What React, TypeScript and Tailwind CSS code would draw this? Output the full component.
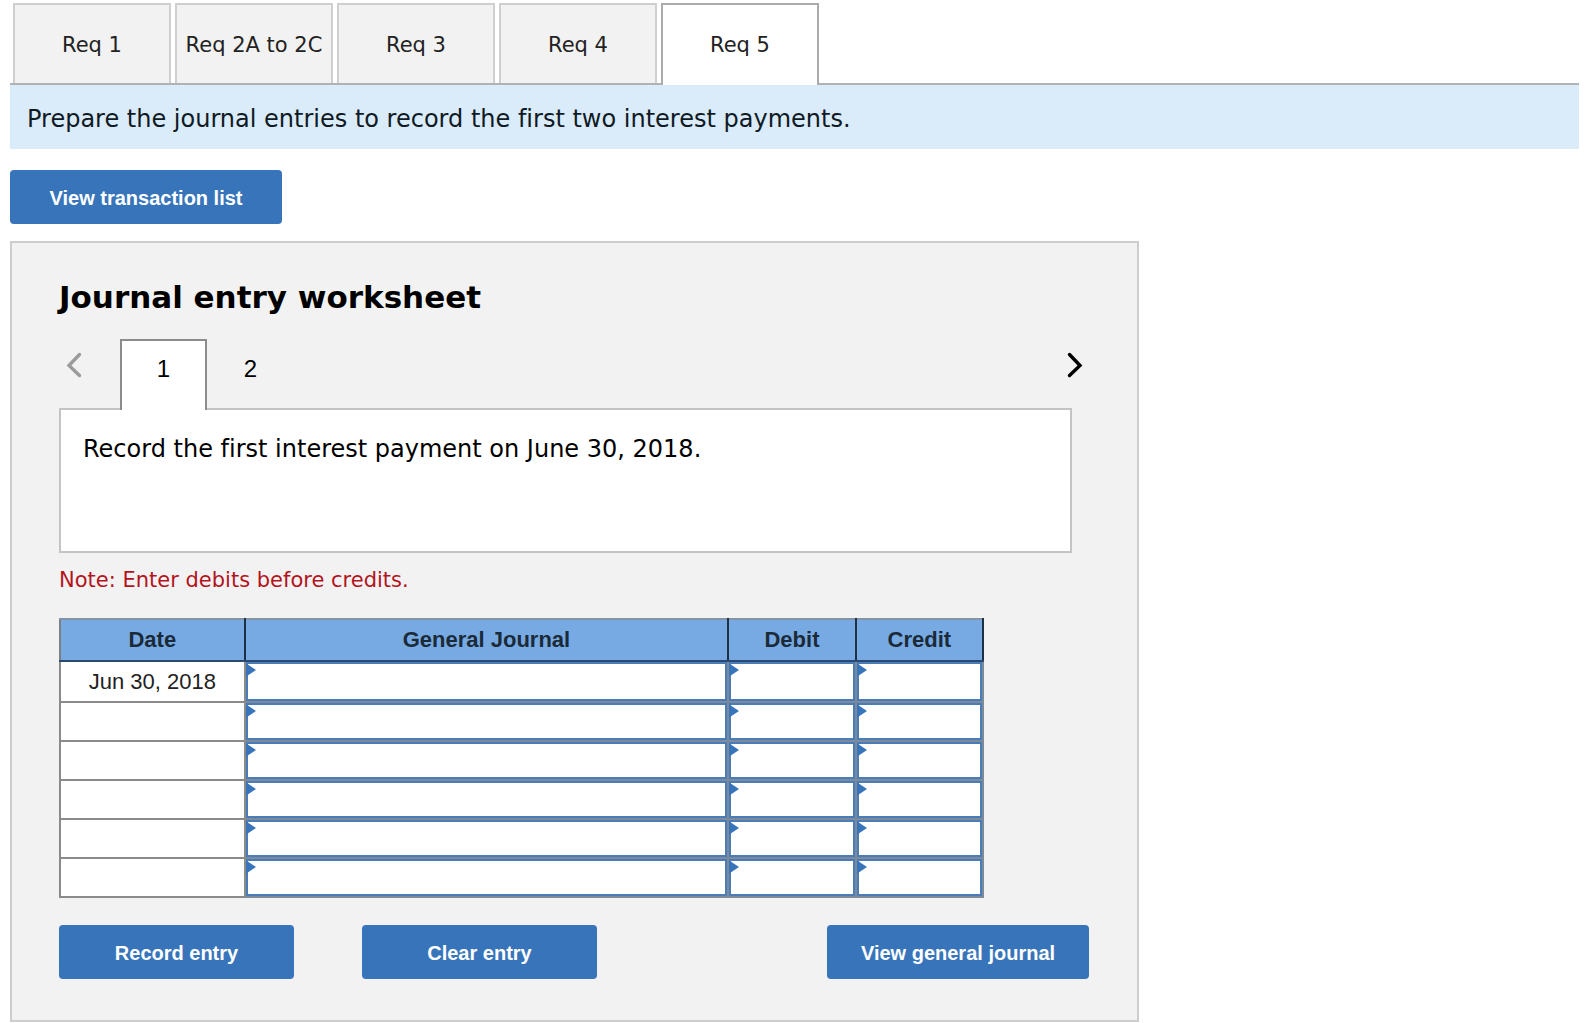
import { useState } from "react";

const requirementTabs = ["Req 1", "Req 2A to 2C", "Req 3", "Req 4", "Req 5"];
const entries = [
  "Record the first interest payment on June 30, 2018.",
  "Record the second interest payment on December 31, 2018.",
];
const dates = ["Jun 30, 2018", "", "", "", "", ""];
const columns = ["General Journal", "Debit", "Credit"];

const sans = "font-['Verdana','DejaVu_Sans',sans-serif] [font-variant-ligatures:none]";
const arial = "font-['Liberation_Sans',Arial,sans-serif]";
const action = `${arial} h-[54px] rounded-[4px] bg-[#3874ba] pt-[2px] text-[20px] leading-6 font-bold text-white`;

function RequirementTabs() {
  const [active, setActive] = useState(4);
  return (
    <div role="tablist" className="flex gap-1 border-b-2 border-[#b0b3b6] pt-[3px] pl-[3px]">
      {requirementTabs.map((label, i) => (
        <button
          key={label}
          type="button"
          role="tab"
          aria-selected={i === active}
          onClick={() => setActive(i)}
          className={
            i === active
              ? "relative -mb-[2px] h-[82px] w-[158px] border-2 border-b-0 border-[#a9abad] bg-white text-[21px] leading-6 text-[#222]"
              : "h-[80px] w-[158px] border-2 border-b-0 border-[#cfcfcf] bg-[#f2f2f2] pt-[2px] text-[21px] leading-6 text-[#222]"
          }
        >
          {label}
        </button>
      ))}
    </div>
  );
}

function Chevron({ d }: { d: string }) {
  return (
    <svg viewBox="0 0 16 26" className="h-[26px] w-4" fill="none" stroke="currentColor" strokeWidth="3.4" strokeLinecap="round" strokeLinejoin="miter">
      <path d={d} />
    </svg>
  );
}

function EntryPager({ page, setPage }: { page: number; setPage: (n: number) => void }) {
  return (
    <div className="flex h-[69px]">
      <button
        type="button"
        aria-label="Previous entry"
        disabled={page === 0}
        onClick={() => setPage(page - 1)}
        className="flex w-[61px] items-start pt-[13px] pl-[7px] text-black disabled:text-[#9b9b9b]"
      >
        <Chevron d="M13.5 2.5L3 13.5L13.5 23.5" />
      </button>
      {entries.map((_, i) => (
        <button
          key={i}
          type="button"
          onClick={() => setPage(i)}
          className={
            i === page
              ? `${arial} relative -mb-[2px] w-[87px] border-2 border-b-0 border-[#8c8c8c] bg-white pb-[14px] text-[24px] text-black`
              : `${arial} w-[87px] pb-[10px] text-[24px] text-black`
          }
        >
          {i + 1}
        </button>
      ))}
      <button
        type="button"
        aria-label="Next entry"
        disabled={page === entries.length - 1}
        onClick={() => setPage(page + 1)}
        className="-mr-[11px] ml-auto flex items-start pt-[13px] text-black disabled:text-[#9b9b9b]"
      >
        <Chevron d="M2.5 2.5L13 13.5L2.5 23.5" />
      </button>
    </div>
  );
}

function JournalTable() {
  return (
    <table className={`${arial} w-full max-w-[925px] table-fixed border-collapse text-[22px] leading-6 text-[#222]`}>
      <colgroup>
        <col className="w-[20%]" />
        <col />
        <col className="w-[13.8%]" />
        <col className="w-[13.8%]" />
      </colgroup>
      <thead>
        <tr className="h-[42px]">
          {["Date", ...columns].map((label) => (
            <th
              key={label}
              scope="col"
              className="border-2 border-t-[#8593a3] border-r-[#1d3045] border-b-[#2c4a6e] border-l-[#7c7f83] bg-[#77aae3] p-0 font-bold text-[#1b2a38]"
            >
              {label}
            </th>
          ))}
        </tr>
      </thead>
      <tbody>
        {dates.map((date, i) => (
          <tr key={i} className="h-[39px] first:h-[41px]">
            <td className="border-2 border-[#8a8a8a] bg-white p-0 text-center">{date}</td>
            {columns.map((column) => (
              <td key={column} className="relative border-2 border-[#7d8b99] bg-white p-0">
                <input
                  type="text"
                  aria-label={`${column}, line ${i + 1}`}
                  className={
                    i === 0
                      ? "block h-[39px] w-full border-2 border-[#4a7cba] bg-white px-3 outline-none"
                      : "block h-[37px] w-full border-2 border-[#4a7cba] bg-white px-3 outline-none"
                  }
                />
                <svg viewBox="0 0 10 12" className="pointer-events-none absolute top-[2px] left-0 h-3 w-[10px]" fill="#3874ba">
                  <path d="M0 0H1L10 6L1 12H0Z" />
                </svg>
              </td>
            ))}
          </tr>
        ))}
      </tbody>
    </table>
  );
}

export default function App() {
  const [page, setPage] = useState(0);
  return (
    <main className={`${sans} bg-white pr-[9px] pl-[10px]`}>
      <RequirementTabs />
      <p className="bg-[#daebfa] px-[17px] pt-[19px] pb-[15px] text-[24px] leading-[30px] text-[#0f1a24]">
        Prepare the journal entries to record the first two interest payments.
      </p>
      <button type="button" className={`${action} mt-[21px] w-[272px]`}>
        View transaction list
      </button>
      <section className="mt-[17px] w-full max-w-[1129px] border-2 border-[#cdcdcd] bg-[#f2f2f2] pt-9 pr-12 pb-[41px] pl-[47px]">
        <h1 className="text-[31px] leading-9 font-bold text-black">Journal entry worksheet</h1>
        <div className="mt-[24px] mr-[17px]">
          <EntryPager page={page} setPage={setPage} />
          <div className="h-[145px] border-2 border-[#c4c4c4] bg-white px-[22px] pt-6 text-[24px] leading-[30px] text-black">
            {entries[page]}
          </div>
        </div>
        <p className="mt-[15px] mb-[26px] text-[21px] leading-6 text-[#b3141d]">Note: Enter debits before credits.</p>
        <JournalTable />
        <div className="mt-[27px] flex">
          <button type="button" className={`${action} w-[235px]`}>Record entry</button>
          <button type="button" className={`${action} ml-[68px] w-[235px]`}>Clear entry</button>
          <button type="button" className={`${action} ml-auto w-[262px]`}>View general journal</button>
        </div>
      </section>
    </main>
  );
}
